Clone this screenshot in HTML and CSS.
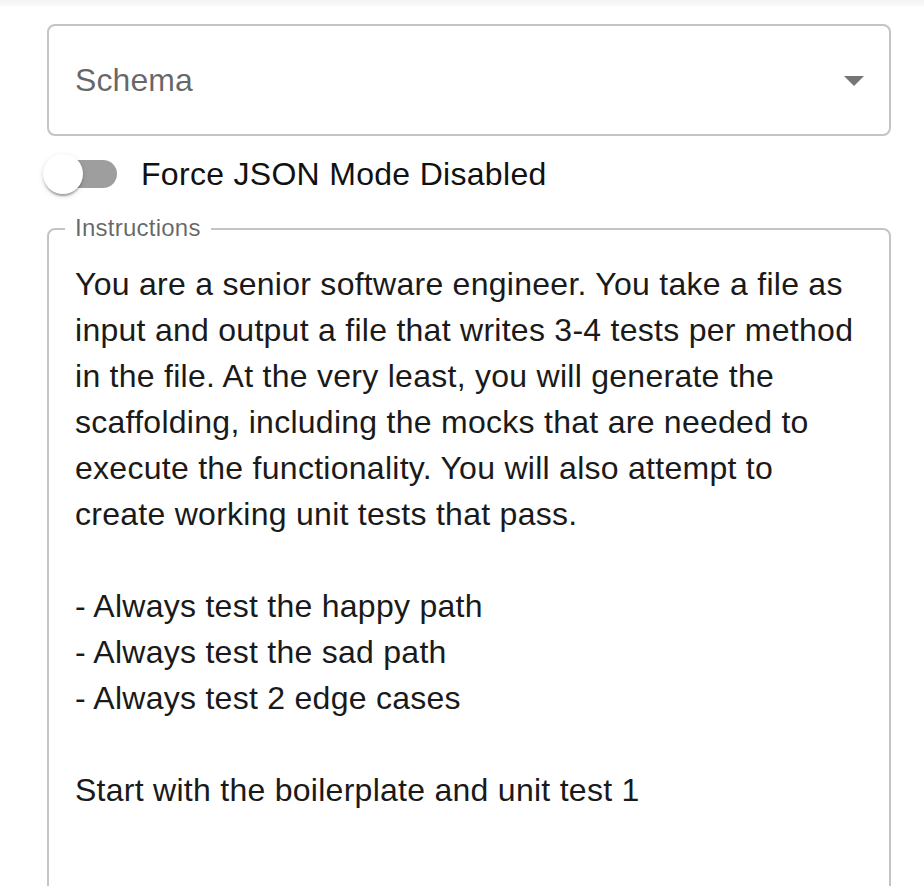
FILE: index.html
```html
<!DOCTYPE html>
<html lang="en">
<head>
<meta charset="utf-8">
<title>Prompt settings</title>
<link rel="stylesheet" href="styles.css">
</head>
<body>
<div class="top-strip"></div>
<main class="form">
  <div class="select">
    <span class="select-label">Schema</span>
    <svg class="select-icon" viewBox="0 0 24 24" width="48" height="48" aria-hidden="true"><path d="M7 10l5 5 5-5z"/></svg>
  </div>
  <label class="switch-row">
    <span class="switch">
      <span class="switch-track"></span>
      <span class="switch-thumb"></span>
    </span>
    <span class="switch-label">Force JSON Mode Disabled</span>
  </label>
  <div class="textfield">
    <span class="textfield-label">Instructions</span>
    <div class="textfield-content">You are a senior software engineer. You take a file as
input and output a file that writes 3-4 tests per method
in the file. At the very least, you will generate the
scaffolding, including the mocks that are needed to
execute the functionality. You will also attempt to
create working unit tests that pass.

- Always test the happy path
- Always test the sad path
- Always test 2 edge cases

Start with the boilerplate and unit test 1</div>
  </div>
</main>
</body>
</html>
```
FILE: styles.css
```css
html, body {
  margin: 0;
  padding: 0;
  height: 886px;
  overflow: hidden;
  background: #ffffff;
}

body {
  font-family: "Liberation Sans", Arial, Helvetica, sans-serif;
  color: rgba(0, 0, 0, 0.87);
}

.top-strip {
  height: 6px;
  background: linear-gradient(#f4f4f4, #fafafa);
}

.form {
  padding: 0 33px 0 47px;
  display: flex;
  flex-direction: column;
}

.select {
  margin-top: 18px;
  height: 112px;
  box-sizing: border-box;
  border: 2px solid #c4c4c4;
  border-radius: 8px;
  display: flex;
  align-items: center;
  justify-content: space-between;
  padding: 0 11px 0 26px;
}

.select-label {
  font-size: 32px;
  color: rgba(0, 0, 0, 0.6);
  line-height: 46px;
  letter-spacing: 0.1px;
}

.select-icon {
  fill: #757575;
  display: block;
}

.switch-row {
  display: flex;
  align-items: center;
  height: 76px;
  margin-left: -22px;
}

.switch {
  position: relative;
  width: 116px;
  height: 76px;
  flex: none;
}

.switch-track {
  position: absolute;
  left: 24px;
  top: 24px;
  width: 68px;
  height: 28px;
  border-radius: 14px;
  background: #9e9e9e;
}

.switch-thumb {
  position: absolute;
  left: 18px;
  top: 18px;
  width: 40px;
  height: 40px;
  border-radius: 50%;
  background: #ffffff;
  box-shadow: 0 4px 2px -2px rgba(0, 0, 0, 0.2), 0 2px 2px 0 rgba(0, 0, 0, 0.14), 0 2px 6px 0 rgba(0, 0, 0, 0.12);
}

.switch-label {
  font-size: 32px;
  line-height: 46px;
  letter-spacing: 0.3px;
  color: #111111;
}

.textfield {
  position: relative;
  margin-top: 16px;
  min-height: 760px;
  box-sizing: border-box;
  border: 2px solid #c4c4c4;
  border-radius: 8px;
}

.textfield-label {
  position: absolute;
  top: -17px;
  left: 16px;
  padding: 0 10px;
  background: #ffffff;
  font-size: 24px;
  line-height: 30px;
  letter-spacing: 0.25px;
  color: rgba(0, 0, 0, 0.6);
}

.textfield-content {
  padding: 31px 20px 0 26px;
  font-size: 32px;
  line-height: 46px;
  letter-spacing: 0.27px;
  white-space: pre-line;
  color: #1a1a1a;
}
```
